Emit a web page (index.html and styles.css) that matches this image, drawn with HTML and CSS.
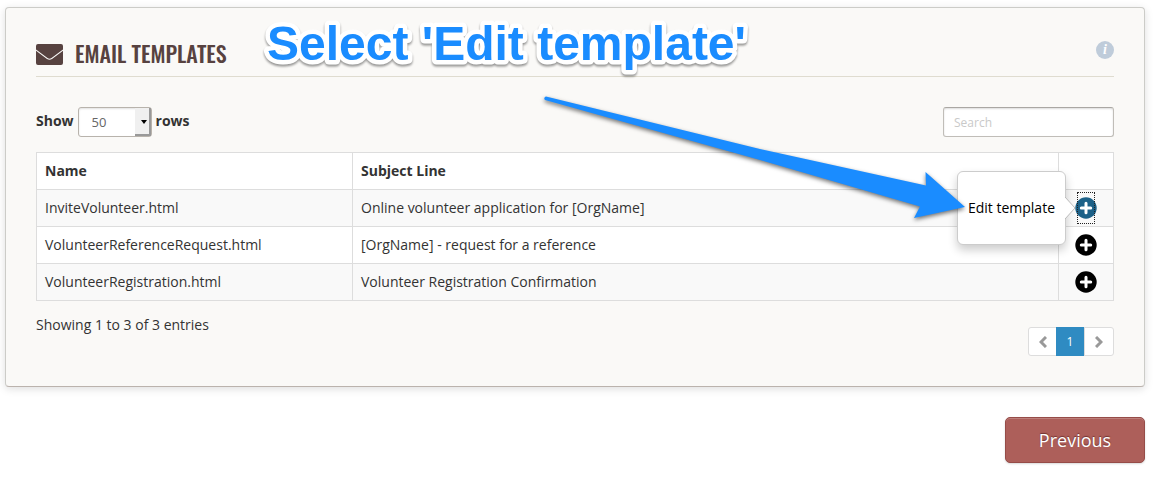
FILE: index.html
```html
<!DOCTYPE html>
<html lang="en">
<head>
<meta charset="utf-8">
<meta name="viewport" content="width=device-width, initial-scale=1">
<title>Email Templates</title>
<link rel="stylesheet" href="styles.css">
</head>
<body>
<svg class="symbols" aria-hidden="true">
  <symbol id="plus" viewBox="0 0 22 22">
    <circle cx="11" cy="11" r="10.700" fill="currentColor"/>
    <path d="M11 6.300v9.400M6.300 11h9.400" stroke="#fff" stroke-width="3" stroke-linecap="round"/>
  </symbol>
</svg>
<main class="page">
  <section class="panel">
    <header class="panel-header">
      <svg class="mail-icon" viewBox="0 0 27 21" aria-hidden="true">
        <path fill="currentColor" d="M2 0h23a2 2 0 0 1 2 2v3.500L15.500 14q-2 1.500-4 0L0 5.500V2a2 2 0 0 1 2-2zM0 6.800l11 8.200q2.500 1.600 5 0L27 6.800V19a2 2 0 0 1-2 2H2a2 2 0 0 1-2-2z"/>
      </svg>
      <h1 class="panel-title">EMAIL TEMPLATES</h1>
      <button class="info" type="button" aria-label="Information">i</button>
    </header>
    <div class="toolbar">
      <label class="length" for="rows">Show
        <span class="select-wrap">
          <select class="select" id="rows"><option>50</option><option>100</option></select>
        </span>
        rows</label>
      <input class="search" type="search" placeholder="Search" aria-label="Search">
    </div>
    <table class="grid">
      <thead>
        <tr><th class="col-name" scope="col">Name</th><th scope="col">Subject Line</th><th class="col-action"></th></tr>
      </thead>
      <tbody>
        <tr>
          <td>InviteVolunteer.html</td>
          <td>Online volunteer application for [OrgName]</td>
          <td class="action">
            <button class="plus plus-active" type="button" aria-label="Actions for InviteVolunteer.html"><svg class="plus-icon"><use href="#plus"/></svg></button>
            <div class="popover"><a class="popover-link" href="#">Edit template</a><svg class="popover-tip" viewBox="0 0 11 22" aria-hidden="true"><path d="M0 0L10 11L0 22" fill="#fff" stroke="#bbb"/></svg></div>
          </td>
        </tr>
        <tr>
          <td>VolunteerReferenceRequest.html</td>
          <td>[OrgName] - request for a reference</td>
          <td class="action"><button class="plus" type="button" aria-label="Actions for VolunteerReferenceRequest.html"><svg class="plus-icon"><use href="#plus"/></svg></button></td>
        </tr>
        <tr>
          <td>VolunteerRegistration.html</td>
          <td>Volunteer Registration Confirmation</td>
          <td class="action"><button class="plus" type="button" aria-label="Actions for VolunteerRegistration.html"><svg class="plus-icon"><use href="#plus"/></svg></button></td>
        </tr>
      </tbody>
    </table>
    <footer class="panel-footer">
      <span>Showing 1 to 3 of 3 entries</span>
      <nav class="pager" aria-label="Pages">
        <button class="pager-item" type="button" aria-label="Previous page"><svg class="chevron" viewBox="0 0 8 12"><path d="M7 1L2 6l5 5"/></svg></button>
        <button class="pager-item pager-current" type="button" aria-current="page">1</button>
        <button class="pager-item" type="button" aria-label="Next page"><svg class="chevron" viewBox="0 0 8 12"><path d="M1 1l5 5-5 5"/></svg></button>
      </nav>
    </footer>
  </section>
  <div class="actions">
    <button class="previous" type="button">Previous</button>
  </div>
  <svg class="callout"><text x="8" y="48">Select 'Edit template'</text></svg>
  <svg class="arrow" viewBox="0 0 424 128" aria-hidden="true">
    <path fill="#1a8cff" d="M3 0.500L217 53L383 89.500L382.500 76L422 111L371 122L377 110.500L217 64L2 4A2 2 0 0 1 3 0.500Z"/>
  </svg>
</main>
</body>
</html>
```

FILE: styles.css
```css
* { box-sizing: border-box; }
body {
  margin: 0;
  background: #fff;
  color: #333;
  font: 14px/20px "Open Sans", "Noto Sans", sans-serif;
}
button, input, select { font: inherit; margin: 0; }
.symbols { position: absolute; width: 0; height: 0; }
.page { position: relative; padding: 7px 11px 14px 5px; }
.panel {
  padding: 30px;
  border: 1px solid #ccccc8;
  border-bottom-color: #bbb3ad;
  border-radius: 4px;
  background: #faf9f7;
  box-shadow: 0 2px 8px rgba(0, 0, 0, .13);
}
.panel-header {
  display: flex;
  align-items: center;
  height: 39px;
  padding-bottom: 8px;
  border-bottom: 1px solid #dfdcd0;
}
.mail-icon { width: 27px; height: 21px; margin-top: 2px; color: #574240; }
.panel-title {
  margin: 0 auto 0 12px;
  color: #574240;
  font: 500 22px/30px Oswald, "Roboto Condensed", "Open Sans Condensed", "Liberation Sans Narrow", "Liberation Sans", sans-serif;
}
.info {
  align-self: flex-start;
  width: 18px;
  height: 18px;
  margin-top: 3px;
  padding: 0;
  border: 0;
  border-radius: 50%;
  background: #bfccda;
  color: #fff;
  font: italic bold 14px/18px "Liberation Serif", serif;
}
.toolbar { display: flex; justify-content: space-between; margin-top: 30px; }
.length { display: flex; align-items: center; gap: 4px; height: 30px; padding-bottom: 2px; font-weight: 700; }
.select-wrap { position: relative; margin-top: 2px; display: flex; }
.select {
  appearance: none;
  width: 74px;
  height: 30px;
  padding: 0 13px;
  border: 1px solid #b8b3ac;
  border-radius: 3px;
  background: #fff;
  box-shadow: inset 0 1px 2px rgba(0, 0, 0, .12);
  color: #666;
  font-size: 13px;
  font-weight: 400;
}
.select-wrap::before {
  content: "";
  position: absolute;
  inset: 1px 1px 1px auto;
  width: 14px;
  border: solid #999;
  border-width: 0 2px 2px 0;
  background: #f0f0f0;
  pointer-events: none;
}
.select-wrap::after {
  content: "";
  position: absolute;
  right: 5px;
  top: 13px;
  border: 3px solid transparent;
  border-top: 4px solid #000;
  border-bottom: 0;
  pointer-events: none;
}
.search {
  appearance: none;
  width: 171px;
  height: 30px;
  padding: 0 10px;
  border: 1px solid #c0bdb8;
  border-top-color: #aaa7a3;
  border-radius: 3px;
  background: #fff;
  box-shadow: inset 0 1px 2px rgba(0, 0, 0, .14);
  font-size: 12px;
}
.search::placeholder { color: #c9c9c9; }
.grid {
  width: 100%;
  margin-top: 15px;
  border-collapse: collapse;
  table-layout: fixed;
  background: #fff;
}
.grid th, .grid td { height: 37px; padding: 0 8px; border: 1px solid #ddd; text-align: left; }
.grid tbody tr:nth-child(odd) { background: #f9f9f9; }
.grid .col-name { width: 316px; }
.grid .col-action { width: 55px; }
.grid .action { position: relative; padding: 0; text-align: center; }
.plus {
  display: block;
  width: 22px;
  height: 22px;
  margin: 0 auto;
  padding: 0;
  border: 0;
  background: none;
  color: #000;
}
.plus-active {
  position: relative;
  color: #1c6188;
}
.plus-active::after {
  content: "";
  position: absolute;
  inset: -5px 2px;
  border: 1px dotted #222;
}
.plus-icon { display: block; width: 22px; height: 22px; }
.popover {
  position: absolute;
  right: 47px;
  top: -19px;
  display: flex;
  align-items: center;
  height: 74px;
  padding: 0 10px;
  border: 1px solid #ccc;
  border-radius: 6px;
  background: #fff;
  box-shadow: 0 5px 10px rgba(0, 0, 0, .2);
  white-space: nowrap;
}
.popover-link { color: #000; text-decoration: none; }
.popover-tip { position: absolute; left: 100%; top: 25px; width: 11px; height: 22px; }
.panel-footer { display: flex; justify-content: space-between; margin-top: 14px; }
.pager { display: flex; margin-top: 12px; border: 1px solid #ddd; border-radius: 3px; background: #fff; }
.pager-item {
  display: grid;
  place-items: center;
  width: 28px;
  height: 27px;
  padding: 0;
  border: 0;
  background: none;
  font-size: 12px;
}
.pager-item:first-child { width: 27px; }
.pager-item:last-child { width: 29px; border-left: 1px solid #ddd; }
.pager-current { height: 29px; margin: -1px 0; background: #2f8bc2; color: #fff; }
.chevron { width: 8px; height: 12px; fill: none; stroke: #999; stroke-width: 3; }
.actions { display: flex; justify-content: flex-end; margin-top: 30px; }
.previous {
  width: 140px;
  height: 46px;
  border: 1px solid #964c48;
  border-radius: 5px;
  background: #ad5f5a;
  box-shadow: inset 0 1px 0 rgba(255, 255, 255, .2), 0 1px 2px rgba(0, 0, 0, .15);
  color: #fff;
  font-size: 18px;
  text-shadow: 0 -1px 1px rgba(70, 20, 20, .6);
}
.callout {
  position: absolute;
  left: 259px;
  top: 12px;
  width: 500px;
  height: 68px;
  overflow: visible;
  fill: #1a8cff;
  stroke: #fff;
  stroke-width: 9px;
  stroke-linejoin: round;
  paint-order: stroke;
  font: 700 48px/56px "Liberation Sans", Arial, sans-serif;
  filter: drop-shadow(0 2px 1px rgba(0, 0, 0, .4));
  pointer-events: none;
}
.arrow {
  position: absolute;
  left: 543px;
  top: 96px;
  width: 424px;
  height: 128px;
  overflow: visible;
  filter: drop-shadow(0 2px 2px rgba(0, 0, 0, .55));
  pointer-events: none;
}
```
